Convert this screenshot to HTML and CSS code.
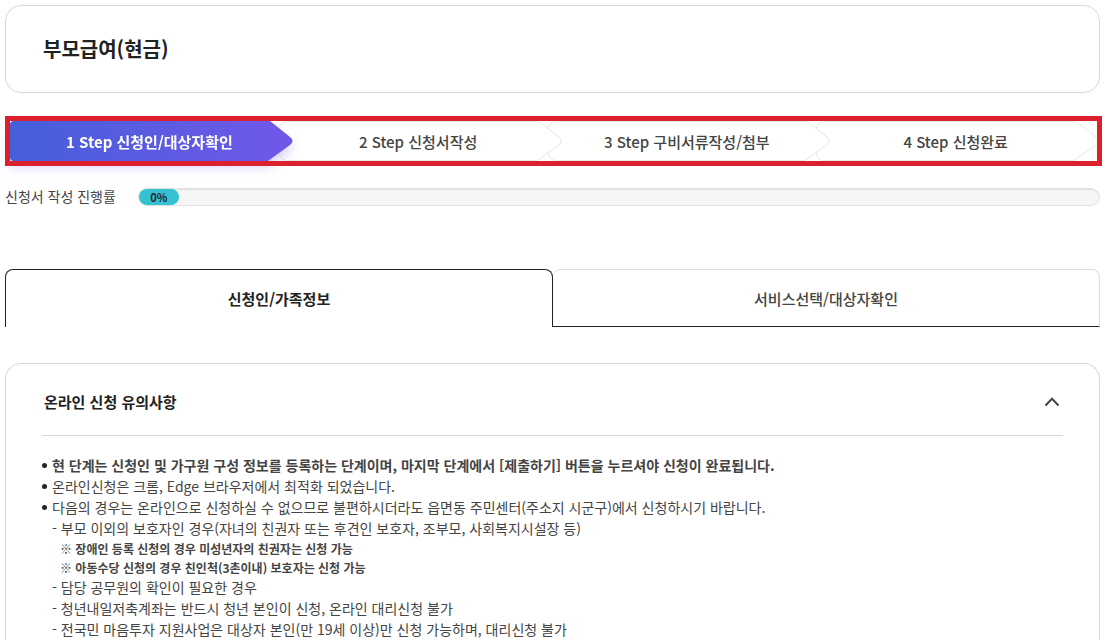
FILE: index.html
```
<!DOCTYPE html>
<html lang="ko">
<head>
    <meta charset="UTF-8">
    <meta name="viewport" content="width=device-width, initial-scale=1.0">
    <title>부모급여(현금)</title>
    <link rel="stylesheet" href="styles.css">
</head>
<body>
    <header class="title-box">
        <h1>부모급여(현금)</h1>
    </header>

    <ol class="steps">
        <li class="step active">
            <span>1 Step 신청인/대상자확인</span>
            <svg class="tip" viewBox="0 0 26 40" aria-hidden="true"><path d="M0 0H3L23 16Q28 20 23 24L1 40H0Z"/></svg>
        </li>
        <li class="step">
            <span>2 Step 신청서작성</span>
            <svg class="tip" viewBox="0 0 26 40" aria-hidden="true"><path d="M0 .5H3L23 16Q27 20 23 24L1 39.5H0"/></svg>
        </li>
        <li class="step">
            <span>3 Step 구비서류작성/첨부</span>
            <svg class="tip" viewBox="0 0 26 40" aria-hidden="true"><path d="M0 .5H3L23 16Q27 20 23 24L1 39.5H0"/></svg>
        </li>
        <li class="step">
            <span>4 Step 신청완료</span>
            <svg class="tip" viewBox="0 0 26 40" aria-hidden="true"><path d="M0 .5H3L23 16Q27 20 23 24L1 39.5H0"/></svg>
        </li>
    </ol>

    <div class="progress">
        <span class="progress-label" id="progress-label">신청서 작성 진행률</span>
        <div class="progress-track" role="progressbar" aria-labelledby="progress-label" aria-valuenow="0" aria-valuemin="0" aria-valuemax="100">
            <div class="progress-fill">0%</div>
        </div>
    </div>

    <div class="tabs" role="tablist">
        <button type="button" class="tab selected" role="tab" aria-selected="true">신청인/가족정보</button>
        <button type="button" class="tab" role="tab" aria-selected="false">서비스선택/대상자확인</button>
    </div>

    <section class="notice">
        <div class="notice-head">
            <h2>온라인 신청 유의사항</h2>
            <button type="button" class="toggle" aria-label="접기">
                <svg width="16" height="10" viewBox="0 0 16 10" aria-hidden="true"><path d="M1.5 8.5L8 1.8L14.5 8.5"/></svg>
            </button>
        </div>
        <ul class="notice-list">
            <li><strong>현 단계는 신청인 및 가구원 구성 정보를 등록하는 단계이며, 마지막 단계에서 [제출하기] 버튼을 누르셔야 신청이 완료됩니다.</strong></li>
            <li>온라인신청은 크롬, Edge 브라우저에서 최적화 되었습니다.</li>
            <li>다음의 경우는 온라인으로 신청하실 수 없으므로 불편하시더라도 읍면동 주민센터(주소지 시군구)에서 신청하시기 바랍니다.
                <ul class="sub-list">
                    <li>- 부모 이외의 보호자인 경우(자녀의 친권자 또는 후견인 보호자, 조부모, 사회복지시설장 등)
                        <p class="remark">※ 장애인 등록 신청의 경우 미성년자의 친권자는 신청 가능</p>
                        <p class="remark">※ 아동수당 신청의 경우 친인척(3촌이내) 보호자는 신청 가능</p>
                    </li>
                    <li>- 담당 공무원의 확인이 필요한 경우</li>
                    <li>- 청년내일저축계좌는 반드시 청년 본인이 신청, 온라인 대리신청 불가</li>
                    <li>- 전국민 마음투자 지원사업은 대상자 본인(만 19세 이상)만 신청 가능하며, 대리신청 불가</li>
                </ul>
            </li>
        </ul>
    </section>
</body>
</html>
```
FILE: styles.css
```
* {
    margin: 0;
    padding: 0;
    box-sizing: border-box;
}

body {
    display: flex;
    flex-direction: column;
    min-height: 100vh;
    padding: 5px 5px 0;
    font-family: "Noto Sans CJK KR", sans-serif;
    font-size: 14px;
    line-height: 21px;
    color: #444;
    background-color: #fff;
}

ul, ol {
    list-style: none;
}

button {
    font-family: inherit;
    cursor: pointer;
    background: none;
    border: none;
}

.title-box {
    padding: 27px 37px;
    border: 1px solid #d8d8d8;
    border-radius: 16px;
}

.title-box h1 {
    font-size: 20px;
    line-height: 32px;
    font-weight: 700;
    color: #222;
}

/* 진행 단계 */
.steps {
    position: relative;
    display: flex;
    margin: 23px -2px 0 0;
    padding: 5px 3px 5px 5px;
}

/* 빨간 강조 테두리 */
.steps::after {
    content: "";
    position: absolute;
    inset: 0;
    z-index: 5;
    border: 5px solid #dc202d;
    pointer-events: none;
}

.step {
    position: relative;
    flex: 1;
    display: flex;
    align-items: center;
    justify-content: center;
    height: 40px;
    margin-right: -14px;
    padding-right: 4px;
    font-size: 15px;
    font-weight: 500;
}

.step::before {
    content: "";
    position: absolute;
    inset: 0 25px 0 0;
    border: 1px solid #eaeaea;
    border-right: none;
    border-radius: 8px 0 0 8px;
    background-color: #fff;
}

.step span {
    position: relative;
}

.step:nth-child(1) { z-index: 4; }
.step:nth-child(2) { z-index: 3; }
.step:nth-child(3) { z-index: 2; }

.step:last-child {
    margin-right: 0;
}

.tip {
    position: absolute;
    top: 0;
    right: 0;
    width: 26px;
    height: 40px;
    fill: #fff;
    stroke: #e6e6e6;
}

.step.active {
    color: #fff;
    font-weight: 700;
    filter: drop-shadow(0 6px 6px rgba(110, 80, 230, 0.25));
}

.step.active::before {
    border: none;
    border-radius: 4px 0 0 4px;
    background: linear-gradient(90deg, #455fda, #6d58e8);
}

.step.active .tip {
    fill: #6d58e8;
    stroke: none;
}

/* 진행률 */
.progress {
    display: flex;
    align-items: center;
    gap: 22px;
    margin-top: 20px;
}

.progress-track {
    flex: 1;
    height: 18px;
    border: 1px solid #e2e2e2;
    border-radius: 9px;
    background-color: #f6f6f6;
    box-shadow: inset 0 1px 1px #e0e0e0;
}

.progress-fill {
    width: 40px;
    height: 16px;
    border-radius: 8px;
    background-color: #34c2d3;
    color: #222;
    font-size: 11px;
    line-height: 16px;
    font-weight: 700;
    text-align: center;
}

/* 탭 */
.tabs {
    display: flex;
    margin-top: 62px;
}

.tab {
    flex: 1;
    height: 58px;
    border: 1px solid #dedede;
    border-bottom-color: #222;
    border-left: none;
    border-radius: 8px 8px 0 0;
    font-size: 15px;
    font-weight: 500;
    color: #444;
}

.tab.selected {
    border: 1px solid #222;
    border-bottom: none;
    font-weight: 700;
    color: #222;
}

/* 유의사항 */
.notice {
    flex: 1;
    margin-top: 36px;
    padding: 0 36px;
    border: 1px solid #d8d8d8;
    border-bottom: none;
    border-radius: 16px 16px 0 0;
}

.notice-head {
    display: flex;
    align-items: center;
    justify-content: space-between;
    height: 72px;
    padding: 4px 3px 0 2px;
    border-bottom: 1px solid #d8d8d8;
}

.notice-head h2 {
    font-size: 15px;
    font-weight: 700;
    color: #222;
}

.toggle svg {
    display: block;
    fill: none;
    stroke: #444;
    stroke-width: 2;
}

.notice-list {
    padding-top: 19px;
}

.notice-list > li {
    position: relative;
    padding-left: 10px;
}

.notice-list > li::before {
    content: "";
    position: absolute;
    top: 8px;
    left: 0;
    width: 5px;
    height: 5px;
    border-radius: 50%;
    background-color: #222;
}

.remark {
    padding-left: 8px;
    font-size: 12px;
    line-height: 19px;
    font-weight: 700;
}
```
